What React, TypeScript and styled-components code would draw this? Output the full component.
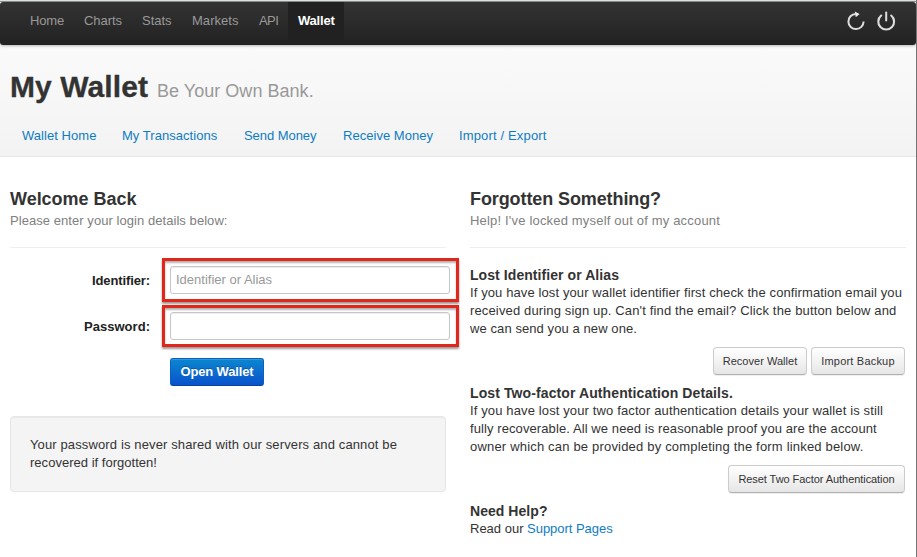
import React from 'react';
import styled, { createGlobalStyle } from 'styled-components';

const GlobalStyle = createGlobalStyle`
  * { box-sizing: border-box; }
  body { margin: 0; background: #fff; overflow: hidden; }
  a { color: #0e7cc4; text-decoration: none; }
`;

const Page = styled.div`
  width: 917px;
  height: 557px;
  overflow: hidden;
  display: flex;
  flex-direction: column;
  border-right: 1px solid #757575;
  background: #fff;
  font: 13px/18px 'Liberation Sans', Arial, sans-serif;
  color: #333;
`;

const Track = styled.span<{ $ls?: number }>`
  letter-spacing: ${({ $ls = 0 }) => $ls}px;
  white-space: pre;
`;

const TopEdge = styled.div`
  flex: none;
  height: 2px;
  background: linear-gradient(#dde3df 50%, #8b918e 50%);
`;

const Header = styled.header`
  flex: none;
  height: 155px;
  background: linear-gradient(#fafafa 30%, #f3f3f3);
  border-bottom: 1px solid #e7e7e7;
`;

const NavBar = styled.nav`
  height: 43px;
  display: flex;
  align-items: stretch;
  padding: 0 20px;
  background: linear-gradient(#333, #222);
  border-radius: 3px;
  box-shadow: 0 1px 3px rgba(0, 0, 0, 0.28);
`;

const NavItem = styled.a<{ $w: number; $active?: boolean }>`
  width: ${({ $w }) => $w}px;
  height: 38px;
  padding: 10px 0 0 10px;
  color: ${({ $active }) => ($active ? '#fff' : '#999')};
  font-weight: ${({ $active }) => ($active ? 'bold' : 'normal')};
  background: ${({ $active }) => ($active ? '#212121' : 'transparent')};
`;

const NavIcons = styled.div`
  margin-left: auto;
  display: flex;
  gap: 10px;
  padding-top: 9px;
  svg { display: block; }
`;

const TitleRow = styled.div`
  height: 82px;
  padding: 24px 10px 0;
  display: flex;
  align-items: baseline;
`;

const Title = styled.h1`
  margin: 0;
  font-size: 30px;
  line-height: 36px;
  -webkit-text-stroke: 0.3px #333;
`;

const Tagline = styled.small`
  margin-left: 9px;
  font-size: 18px;
  color: #999;
`;

const SubNav = styled.nav`
  display: flex;
  padding-left: 22px;
`;

const SubLink = styled.a<{ $w: number }>`
  width: ${({ $w }) => $w}px;
`;

const Columns = styled.main`
  display: flex;
  gap: 24px;
  padding: 30px 10px 0;
`;

const Column = styled.section`
  width: 436px;
`;

const ColumnHead = styled.div`
  height: 61px;
  border-bottom: 1px solid #eee;
  margin-bottom: 18px;
`;

const ColumnTitle = styled.h3`
  margin: 0 0 1px;
  font-size: 18px;
  line-height: 24px;
`;

const Muted = styled.p`
  margin: 0;
  color: #808080;
`;

const FormRow = styled.div`
  height: 46px;
  display: flex;
  align-items: flex-start;
`;

const Label = styled.label`
  flex: none;
  width: 140px;
  margin-right: 20px;
  padding-top: 6px;
  text-align: right;
  font-weight: bold;
  color: #222;
`;

const Field = styled.div`
  position: relative;
  width: 280px;
  height: 28px;
  flex: none;
`;

const Input = styled.input`
  display: block;
  width: 280px;
  height: 28px;
  padding: 3px 5px 5px;
  border: 1px solid #c6c6c6;
  border-radius: 3px;
  outline: none;
  background: #fff;
  box-shadow: inset 0 1px 1px rgba(0, 0, 0, 0.075);
  font: inherit;
  &::placeholder { color: #999; opacity: 1; }
`;

const Highlight = styled.div<{ $top: number; $h: number }>`
  position: absolute;
  left: -8px;
  top: ${({ $top }) => $top}px;
  width: 297px;
  height: ${({ $h }) => $h}px;
  border: 3px solid #e1261c;
  box-shadow: 0 2px 2px rgba(0, 0, 0, 0.4), inset 0 2px 2px rgba(0, 0, 0, 0.3);
  pointer-events: none;
`;

const PrimaryButton = styled.button`
  width: 94px;
  height: 28px;
  padding: 0 0 1px;
  margin-left: 160px;
  border: 1px solid #0a5fc0;
  border-bottom-color: #0745a0;
  border-radius: 3px;
  background: linear-gradient(#0b87cf, #0a52cc);
  box-shadow: inset 0 1px 0 rgba(255, 255, 255, 0.15);
  color: #fff;
  font: bold 13px/18px 'Liberation Sans', Arial, sans-serif;
  text-shadow: 0 -1px 0 rgba(0, 0, 0, 0.25);
`;

const Button = styled.button<{ $w: number }>`
  width: ${({ $w }) => $w}px;
  height: 28px;
  padding: 0;
  border: 1px solid #ccc;
  border-bottom-color: #b0b0b0;
  border-radius: 4px;
  background: linear-gradient(#fff, #e6e6e6);
  box-shadow: 0 1px 1px rgba(0, 0, 0, 0.07);
  color: #333;
  font: 11px/16px 'Liberation Sans', Arial, sans-serif;
`;

const ButtonRow = styled.div`
  display: flex;
  justify-content: flex-end;
  gap: 4px;
  padding: 9px 1px 9px 0;
`;

const Well = styled.div`
  height: 76px;
  margin-top: 12px;
  padding: 19px;
  border: 1px solid #e6e6e6;
  border-radius: 4px;
  background: #f4f4f4;
  box-shadow: inset 0 1px 1px rgba(0, 0, 0, 0.05);
`;

const Line = styled.div`
  white-space: nowrap;
`;

const HelpTitle = styled.h4`
  margin: 0;
  font-size: 14px;
  line-height: 18px;
`;

const RefreshIcon = () => (
  <svg width="20" height="22" viewBox="0 0 20 22" fill="none">
    <path d="M9.7 2.9 A7.6 7.6 0 1 0 17.6 10.6" stroke="#ddd" strokeWidth="2" />
    <path d="M8.8 0.4 L13.6 3.1 L9.8 6.2 Z" fill="#eee" />
  </svg>
);

const PowerIcon = () => (
  <svg width="20" height="22" viewBox="0 0 20 22" fill="none">
    <path d="M5.2 4.5 A7.9 7.9 0 1 0 15.2 4.5" stroke="#ddd" strokeWidth="2.1" strokeLinecap="round" />
    <path d="M10.2 1.6 V9.6" stroke="#ddd" strokeWidth="2" strokeLinecap="round" />
  </svg>
);

const navItems = [
  { text: 'Home', w: 54, ls: -0.17 },
  { text: 'Charts', w: 58, ls: -0.05 },
  { text: 'Stats', w: 50, ls: -0.02 },
  { text: 'Markets', w: 67, ls: 0.04 },
  { text: 'API', w: 39, ls: -0.6 },
  { text: 'Wallet', w: 56, ls: -0.2, active: true },
];

const subLinks = [
  { text: 'Wallet Home', w: 100, ls: 0.05 },
  { text: 'My Transactions', w: 122, ls: 0.04 },
  { text: 'Send Money', w: 99, ls: -0.05 },
  { text: 'Receive Money', w: 116, ls: 0.03 },
  { text: 'Import / Export', w: 90, ls: 0.15 },
];

export default function App() {
  return (
    <Page>
      <GlobalStyle />
      <TopEdge />
      <Header>
        <NavBar>
          {navItems.map((n) => (
            <NavItem key={n.text} $w={n.w} $active={n.active}>
              <Track $ls={n.ls}>{n.text}</Track>
            </NavItem>
          ))}
          <NavIcons>
            <RefreshIcon />
            <PowerIcon />
          </NavIcons>
        </NavBar>
        <TitleRow>
          <Title><Track $ls={0.084}>My Wallet</Track></Title>
          <Tagline><Track $ls={0.034}>Be Your Own Bank.</Track></Tagline>
        </TitleRow>
        <SubNav>
          {subLinks.map((s) => (
            <SubLink key={s.text} $w={s.w} href="#">
              <Track $ls={s.ls}>{s.text}</Track>
            </SubLink>
          ))}
        </SubNav>
      </Header>
      <Columns>
        <Column>
          <ColumnHead>
            <ColumnTitle><Track $ls={-0.02}>Welcome Back</Track></ColumnTitle>
            <Muted><Track $ls={0.057}>Please enter your login details below:</Track></Muted>
          </ColumnHead>
          <FormRow>
            <Label><Track $ls={-0.11}>Identifier:</Track></Label>
            <Field>
              <Input placeholder="Identifier or Alias" />
              <Highlight $top={-8} $h={44} />
            </Field>
          </FormRow>
          <FormRow>
            <Label><Track $ls={0.03}>Password:</Track></Label>
            <Field>
              <Input type="password" />
              <Highlight $top={-7} $h={42} />
            </Field>
          </FormRow>
          <FormRow>
            <PrimaryButton><Track $ls={-0.15}>Open Wallet</Track></PrimaryButton>
          </FormRow>
          <Well>
            <Line><Track $ls={0.127}>Your password is never shared with our servers and cannot be</Track></Line>
            <Line><Track $ls={0.024}>recovered if forgotten!</Track></Line>
          </Well>
        </Column>
        <Column>
          <ColumnHead>
            <ColumnTitle><Track $ls={-0.099}>Forgotten Something?</Track></ColumnTitle>
            <Muted><Track $ls={0.182}>Help! I've locked myself out of my account</Track></Muted>
          </ColumnHead>
          <HelpTitle><Track $ls={0.071}>Lost Identifier or Alias</Track></HelpTitle>
          <Line><Track $ls={0.11}>If you have lost your wallet identifier first check the confirmation email you</Track></Line>
          <Line><Track $ls={0.146}>received during sign up. Can't find the email? Click the button below and</Track></Line>
          <Line><Track $ls={0.085}>we can send you a new one.</Track></Line>
          <ButtonRow>
            <Button $w={94}><Track $ls={0.024}>Recover Wallet</Track></Button>
            <Button $w={94}><Track $ls={0.198}>Import Backup</Track></Button>
          </ButtonRow>
          <HelpTitle><Track $ls={0.102}>Lost Two-factor Authentication Details.</Track></HelpTitle>
          <Line><Track $ls={0.129}>If you have lost your two factor authentication details your wallet is still</Track></Line>
          <Line><Track $ls={0.092}>fully recoverable. All we need is reasonable proof you are the account</Track></Line>
          <Line><Track $ls={0.187}>owner which can be provided by completing the form linked below.</Track></Line>
          <ButtonRow>
            <Button $w={177}><Track $ls={-0.063}>Reset Two Factor Authentication</Track></Button>
          </ButtonRow>
          <HelpTitle><Track $ls={0.049}>Need Help?</Track></HelpTitle>
          <Line>Read our <a href="#"><Track $ls={-0.039}>Support Pages</Track></a></Line>
        </Column>
      </Columns>
    </Page>
  );
}
